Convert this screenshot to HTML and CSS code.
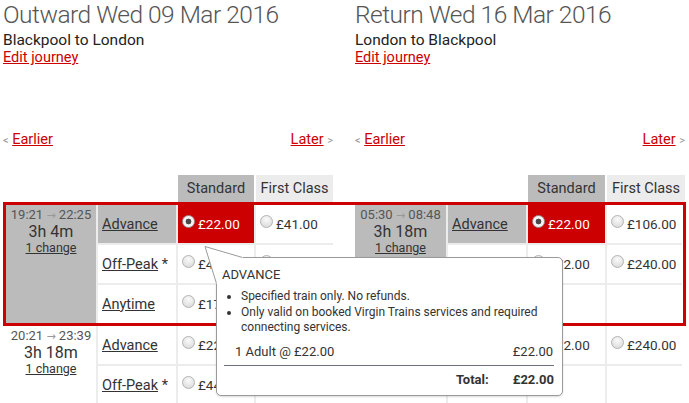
FILE: index.html
```html
<!DOCTYPE html>
<html lang="en">
<head>
<meta charset="utf-8">
<title>Choose journeys</title>
<link rel="stylesheet" href="styles.css">
</head>
<body>
<div class="page">
  <div class="pair heads">
    <div class="head">
      <h1>Outward Wed 09 Mar 2016</h1>
      <div class="route">Blackpool to London</div>
      <a class="link edit" href="#">Edit journey</a>
    </div>
    <div class="head">
      <h1>Return Wed 16 Mar 2016</h1>
      <div class="route">London to Blackpool</div>
      <a class="link edit" href="#">Edit journey</a>
    </div>
  </div>

  <div class="pair navs">
    <div class="nav">
      <span><span class="chev">&lt;</span> <a class="link" href="#">Earlier</a></span>
      <span><a class="link" href="#">Later</a> <span class="chev">&gt;</span></span>
    </div>
    <div class="nav">
      <span><span class="chev">&lt;</span> <a class="link" href="#">Earlier</a></span>
      <span><a class="link" href="#">Later</a> <span class="chev">&gt;</span></span>
    </div>
  </div>

  <div class="pair classes">
    <div class="classrow left"><span class="spacer"></span><span class="std">Standard</span><span class="first">First Class</span></div>
    <div class="classrow right"><span class="spacer"></span><span class="std">Standard</span><span class="first">First Class</span></div>
  </div>

  <div class="jrow selected">
    <div class="fares left">
      <div class="info sel">
        <div class="times">19:21 <span class="arr">&rarr;</span> 22:25</div>
        <div class="dur">3h 4m</div>
        <a class="chg" href="#">1 change</a>
      </div>
      <div class="name sel"><a href="#">Advance</a></div>
      <div class="price chosen"><span class="radio on"></span>£22.00</div>
      <div class="price"><span class="radio"></span>£41.00</div>
      <div class="name"><a href="#">Off-Peak</a>&nbsp;*</div>
      <div class="price"><span class="radio"></span>£44.00</div>
      <div class="price"><span class="radio"></span>£120.00</div>
      <div class="name"><a href="#">Anytime</a></div>
      <div class="price"><span class="radio"></span>£172.00</div>
      <div class="price"><span class="radio"></span>£250.00</div>
    </div>
    <div class="fares right">
      <div class="info sel">
        <div class="times">05:30 <span class="arr">&rarr;</span> 08:48</div>
        <div class="dur">3h 18m</div>
        <a class="chg" href="#">1 change</a>
      </div>
      <div class="name sel"><a href="#">Advance</a></div>
      <div class="price chosen"><span class="radio on"></span>£22.00</div>
      <div class="price"><span class="radio"></span>£106.00</div>
      <div class="name"><a href="#">Off-Peak</a>&nbsp;*</div>
      <div class="price"><span class="radio"></span>£72.00</div>
      <div class="price"><span class="radio"></span>£240.00</div>
      <div class="name"></div>
      <div class="price"></div>
      <div class="price"></div>
    </div>
  </div>

  <div class="jrow">
    <div class="fares left">
      <div class="info">
        <div class="times">20:21 <span class="arr">&rarr;</span> 23:39</div>
        <div class="dur">3h 18m</div>
        <a class="chg" href="#">1 change</a>
      </div>
      <div class="name"><a href="#">Advance</a></div>
      <div class="price"><span class="radio"></span>£22.00</div>
      <div class="price"><span class="radio"></span>£41.00</div>
      <div class="name"><a href="#">Off-Peak</a>&nbsp;*</div>
      <div class="price"><span class="radio"></span>£44.00</div>
      <div class="price"><span class="radio"></span>£120.00</div>
      <div class="name"><a href="#">Anytime</a></div>
      <div class="price"><span class="radio"></span>£172.00</div>
      <div class="price"><span class="radio"></span>£250.00</div>
    </div>
    <div class="fares right">
      <div class="info">
        <div class="times">07:30 <span class="arr">&rarr;</span> 10:41</div>
        <div class="dur">3h 11m</div>
        <a class="chg" href="#">1 change</a>
      </div>
      <div class="name"><a href="#">Off-Peak</a>&nbsp;*</div>
      <div class="price"><span class="radio"></span>£72.00</div>
      <div class="price"><span class="radio"></span>£240.00</div>
      <div class="name"></div>
      <div class="price"></div>
      <div class="price"></div>
      <div class="name"></div>
      <div class="price"></div>
      <div class="price"></div>
    </div>
  </div>

  <div class="tip">
    <div class="tip-title">ADVANCE</div>
    <ul>
      <li>Specified train only. No refunds.</li>
      <li>Only valid on booked Virgin Trains services and required connecting services.</li>
    </ul>
    <div class="tip-line"><span>1 Adult @ £22.00</span><span>£22.00</span></div>
    <div class="tip-rule"></div>
    <div class="tip-total"><span>Total:</span><span>£22.00</span></div>
    <svg class="tail" width="46" height="46" viewBox="0 0 46 46">
      <polygon points="1,1 39,12 39,14 14,14 14,39 12,39" fill="#fff"/>
      <polyline points="38.5,12.5 1,1.5 12.5,38.5" fill="none" stroke="#9a9a9a" stroke-width="1"/>
    </svg>
  </div>
</div>
</body>
</html>
```

FILE: styles.css
```css
* { box-sizing: border-box; }

body {
  margin: 0;
  background: #fff;
  color: #333;
  font-family: Roboto, "Liberation Sans", sans-serif;
}

.page {
  position: relative;
  width: 689px;
  height: 403px;
  overflow: hidden;
  padding-left: 3px;
}

.pair {
  display: grid;
  grid-template-columns: 330px 330px;
  column-gap: 22px;
}

h1 {
  margin: 0;
  font-size: 24.5px;
  line-height: 30px;
  font-weight: 300;
  letter-spacing: -0.5px;
  color: #555;
}

.route {
  font-size: 15.5px;
  line-height: 20px;
  color: #222;
}

.link {
  color: #cc0000;
  text-decoration: underline;
}

.edit {
  display: block;
  font-size: 14.5px;
  line-height: 16px;
}

.navs {
  margin-top: 66px;
  font-size: 14.5px;
  line-height: 16px;
}

.nav {
  display: flex;
  justify-content: space-between;
}

.chev {
  color: #999;
  font-size: 11px;
}

.classes {
  margin-top: 26px;
}

.classrow {
  display: grid;
  column-gap: 2px;
}
.classrow.left { grid-template-columns: 1fr 76px 77px; }
.classrow.right { grid-template-columns: 1fr 77px 78px; }

.classrow span {
  height: 27px;
  line-height: 27px;
  text-align: center;
  font-size: 14.5px;
  color: #333;
}
.classrow .std { background: #bbbbbb; }
.classrow .first { background: #ececec; }

.jrow {
  display: grid;
  grid-template-columns: 327px 327px;
  column-gap: 22px;
  width: 683px;
  border: 3px solid transparent;
}
.jrow.selected { border-color: #cc0000; }
.jrow + .jrow { margin-top: -3px; }

.fares {
  display: grid;
  grid-template-rows: 38px 38px 38px;
  gap: 2px;
  background: #ececec;
}
.fares.left { grid-template-columns: 90px 78px 76px 77px; }
.fares.right { grid-template-columns: 91px 78px 77px 75px; }

.fares > div { background: #fff; }
.fares > .sel { background: #bbbbbb; }

.info {
  grid-row: span 3;
  text-align: center;
  padding-top: 3px;
}
.times {
  font-size: 13px;
  line-height: 14px;
  color: #555;
}
.arr {
  color: #999;
  font-family: "DejaVu Sans", sans-serif;
  font-size: 11px;
}
.dur {
  font-size: 16px;
  line-height: 18px;
  color: #333;
}
.chg {
  display: block;
  font-size: 12.5px;
  line-height: 14px;
  color: #333;
  text-decoration: underline;
}

.name {
  display: flex;
  align-items: center;
  padding-left: 4px;
  font-size: 14.5px;
  color: #333;
}
.name a { color: #333; text-decoration: underline; }

.price {
  display: flex;
  align-items: center;
  gap: 3px;
  padding-left: 4px;
  font-size: 13.5px;
  color: #333;
}
.fares > .chosen {
  background: #cc0000;
  color: #fff;
}

.radio {
  display: inline-block;
  flex: none;
  width: 13px;
  height: 13px;
  border-radius: 50%;
  border: 1px solid #b3b3b3;
  background: radial-gradient(circle at 50% 30%, #fafafa, #d6d6d6);
  margin-top: -6px;
}
.radio.on {
  border-color: #999;
  background: radial-gradient(circle, #4a4a4a 0 2.6px, #f4f4f4 3.2px);
}

.tip {
  position: absolute;
  left: 216px;
  top: 257px;
  width: 347px;
  height: 139px;
  background: #fff;
  border: 1px solid #9a9a9a;
  border-radius: 5px;
  box-shadow: 0 1px 2px rgba(0, 0, 0, 0.15);
  padding: 9px 8px 0 5px;
  font-size: 12px;
  color: #333;
}
.tip-title {
  font-size: 13px;
  line-height: 16px;
}
.tip ul {
  margin: 6px 0 0;
  padding-left: 19px;
  line-height: 15.5px;
}
.tip-line {
  display: flex;
  justify-content: space-between;
  margin-top: 8px;
  padding: 0 1px 0 13px;
  font-size: 13px;
  line-height: 16px;
}
.tip-rule {
  margin: 5px 0 0 2px;
  border-top: 1px solid #6c7079;
}
.tip-total {
  display: flex;
  justify-content: flex-end;
  gap: 24px;
  margin-top: 6px;
  font-size: 13px;
  line-height: 16px;
  font-weight: bold;
}
.tail {
  position: absolute;
  left: -13px;
  top: -13px;
  overflow: visible;
}
```
